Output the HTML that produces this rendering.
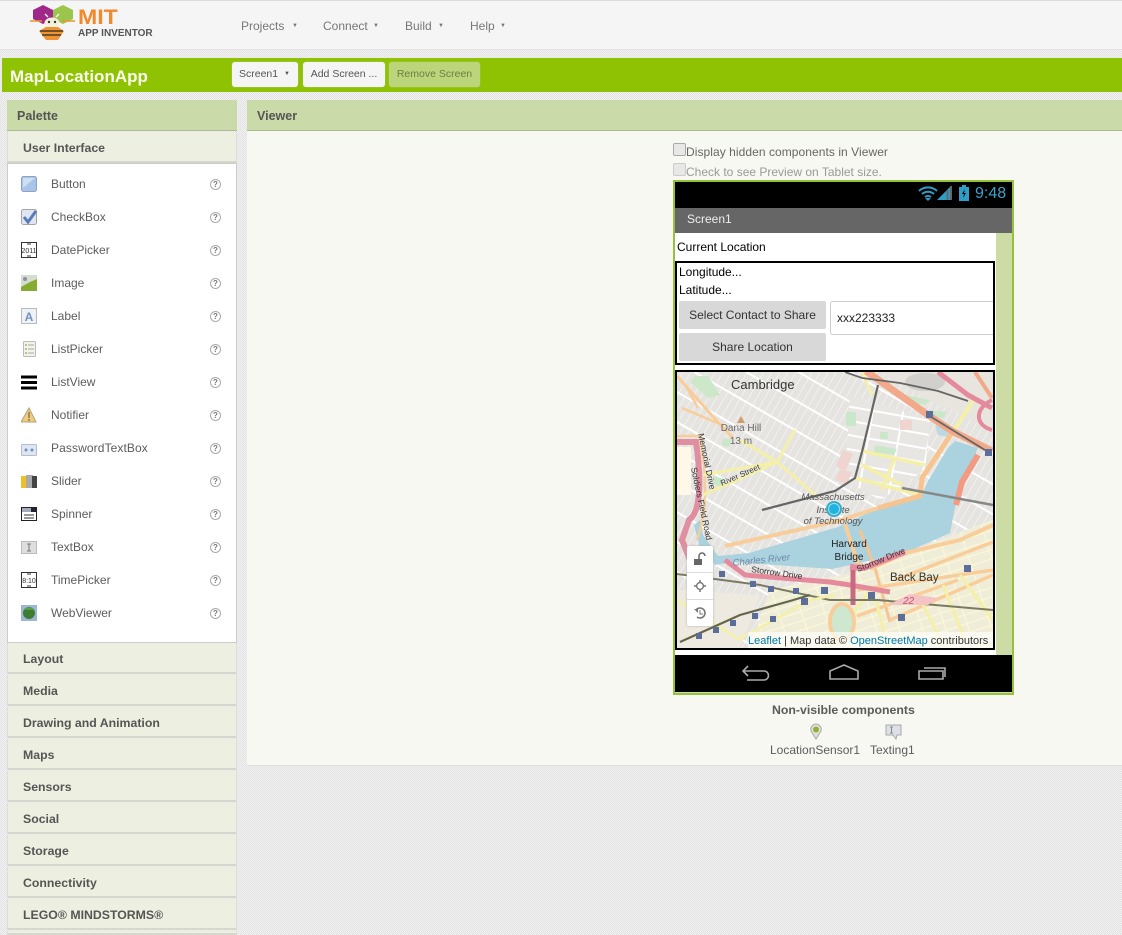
<!DOCTYPE html>
<html><head><meta charset="utf-8"><style>
html,body{margin:0;padding:0;width:1122px;height:935px;overflow:hidden}
body{position:relative;background-color:#e9e9e9;background-image:conic-gradient(#f2f2f2 25%,#e2e2e2 0 50%,#f2f2f2 0 75%,#e2e2e2 0);background-size:2px 2px;font-family:"Liberation Sans",sans-serif;color:#555}
div,span{position:absolute;white-space:nowrap;box-sizing:border-box}
svg{position:absolute;overflow:hidden}
#w{left:0;top:0;width:1122px;height:935px;overflow:hidden}
.n{top:19px;font-size:12px;line-height:15px;color:#777}
.c{font-size:6px;color:#777}
.h{left:7px;width:230px;height:31px;background:#edf0e1;border-bottom:2px solid #d6d8cd;border-right:1px solid #ddd;border-left:1px solid #ddd;font-weight:bold;font-size:12.3px;line-height:33px;padding-left:15px;color:#555}
.r{left:51px;font-size:12px;line-height:15px;color:#5c5c5c;margin-top:1px}
.q{left:210px;width:11px;height:11px;border:1px solid #aaa;border-radius:50%;font-size:8px;line-height:9px;text-align:center;color:#777;font-weight:bold}
.btn{background:#f5f5f5;border-radius:3px;top:62px;height:25px;font-size:10.5px;line-height:25px;text-align:center;color:#555;box-shadow:0 0 1px #ccc}
.b{color:#000;font-size:12px;line-height:14px}
.g{background:#d8d8d8;border-radius:2px;font-size:12px;text-align:center;color:#333;left:679px;width:147px;height:28px;line-height:29px}
</style></head><body><div id="w">
<div style="left:0;top:0;width:1122px;height:50px;background:#f5f5f5;border-top:1px solid #ddd;border-bottom:1px solid #e2e2e2"></div>
<svg style="left:28px;top:2px" width="50" height="40" viewBox="0 0 50 40">
<polygon points="5,8 15,3 25,8 25,17 15,22 5,17" fill="#a0288a"/>
<polygon points="25,8 35,3 45,8 45,17 35,22 25,17" fill="#9cc54e"/>
<path d="M2 19L14 19M34 19L47 19" stroke="#e8952f" stroke-width="1.5"/>
<ellipse cx="24" cy="21" rx="7.500" ry="5.500" fill="#f5f0dc"/>
<circle cx="21" cy="20" r="1.200" fill="#333"/><circle cx="27" cy="20" r="1.200" fill="#333"/>
<path d="M20 15L17 12M28 15L31 12" stroke="#fff" stroke-width="1.300"/>
<polygon points="11,29 18,25 30,25 36,29 30,38 18,38" fill="#ef9333"/>
<path d="M12 29H35M14 33H33" stroke="#4a3a28" stroke-width="1.600"/>
</svg>
<div style="left:78px;top:5px;font-size:21px;line-height:26px;font-weight:bold;color:#f08a2c;transform:scaleX(1.1);transform-origin:0 0">MIT</div>
<div style="left:78px;top:27px;font-size:10px;line-height:13px;font-weight:bold;color:#555">APP INVENTOR</div>
<div class="n" style="left:241px">Projects</div><div class="c" style="left:292px;top:23px">▼</div>
<div class="n" style="left:323px">Connect</div><div class="c" style="left:373px;top:23px">▼</div>
<div class="n" style="left:405px">Build</div><div class="c" style="left:438px;top:23px">▼</div>
<div class="n" style="left:470px">Help</div><div class="c" style="left:500px;top:23px">▼</div>

<div style="left:2px;top:58px;width:1120px;height:34px;background:#8fc202"></div>
<div style="left:10px;top:66px;font-size:17px;line-height:22px;font-weight:bold;color:#fafdf0">MapLocationApp</div>
<div class="btn" style="left:232px;width:66px;text-align:left;padding-left:7px">Screen1 <span class="c" style="left:52px;top:0;color:#555">▼</span></div>
<div class="btn" style="left:303px;width:82px">Add Screen ...</div>
<div class="btn" style="left:389px;width:91px;background:#bcd57a;color:#6c7c45">Remove Screen</div>

<div style="left:7px;top:100px;width:230px;height:31px;background:#cadaa8;border-bottom:1px solid #aebb92;font-weight:bold;font-size:12.5px;line-height:32px;padding-left:10px;color:#555">Palette</div>
<div style="left:247px;top:100px;width:875px;height:31px;background:#cadaa8;border-bottom:1px solid #aebb92;font-weight:bold;font-size:12.5px;line-height:32px;padding-left:10px;color:#555">Viewer</div>
<div class="h" style="top:132px">User Interface</div>
<div style="left:7px;top:163px;width:230px;height:480px;background:#fff;border:1px solid #ccc"></div>

<svg style="left:21px;top:176px" width="17" height="17"><rect x=".5" y=".5" width="15" height="15" rx="2" fill="#a9c4e6" stroke="#8ca3c4"/><path d="M2 2H14L2 12Z" fill="#cfdff3"/></svg>
<svg style="left:21px;top:209px" width="17" height="17"><rect x=".5" y=".5" width="15" height="15" rx="2" fill="#dfe6f1" stroke="#a5a5a5"/><path d="M3 8L7 13L15 2" fill="none" stroke="#5a7cba" stroke-width="3"/></svg>
<svg style="left:21px;top:242px" width="17" height="17"><rect x=".5" y=".5" width="15" height="15" fill="#fff" stroke="#333"/><path d="M6 2H10M6 14H10" stroke="#333"/><text x="8" y="11" font-size="7" text-anchor="middle" fill="#333" font-family="Liberation Sans">2011</text></svg>
<svg style="left:21px;top:275px" width="17" height="17"><rect width="16" height="16" fill="#d5dcd0"/><path d="M0 12L9 7L16 4V16H0Z" fill="#86ac2f"/><circle cx="4" cy="4" r="2" fill="#8d8da8"/></svg>
<svg style="left:21px;top:308px" width="17" height="17"><rect x=".5" y=".5" width="15" height="15" fill="#eef1f6" stroke="#bbb"/><text x="8" y="13" font-size="12" font-weight="bold" text-anchor="middle" fill="#7391bf" font-family="Liberation Sans">A</text></svg>
<svg style="left:23px;top:341px" width="15" height="17"><rect x=".5" y=".5" width="12" height="15" rx="1" fill="#f3f3e6" stroke="#bbb"/><path d="M5 4H11M5 8H11M5 12H11" stroke="#aaa"/><path d="M2 4H4M2 8H4M2 12H4" stroke="#6f9a4f"/></svg>
<svg style="left:21px;top:375px" width="17" height="15"><path d="M0 2H16M0 7.500H16M0 13H16" stroke="#000" stroke-width="3"/></svg>
<svg style="left:21px;top:407px" width="17" height="16"><polygon points="8,1 15,15 0,15" fill="#efcc7f" stroke="#b5a27a"/><rect x="7" y="5" width="2" height="6" fill="#a58a5a"/><rect x="7" y="12" width="2" height="2" fill="#a58a5a"/></svg>
<svg style="left:21px;top:441px" width="17" height="17"><rect x=".5" y="3.500" width="15" height="11" rx="1" fill="#dfe6f3" stroke="#b4bccb"/><circle cx="5" cy="9" r="1.500" fill="#6f8fc0"/><circle cx="11" cy="9" r="1.500" fill="#6f8fc0"/></svg>
<svg style="left:21px;top:474px" width="17" height="15"><rect y="2" width="5" height="12" fill="#efc026"/><rect x="5" y="1" width="7" height="13" fill="#aaa"/><rect x="11" y="2" width="5" height="12" fill="#444"/></svg>
<svg style="left:21px;top:507px" width="17" height="15"><rect x=".5" y=".5" width="15" height="13" fill="#fff" stroke="#222"/><rect x="1" y="1" width="14" height="4" fill="#a5adbd"/><rect x="10" y="1" width="5" height="4" fill="#223"/><path d="M3 8H13M3 11H13" stroke="#333"/></svg>
<svg style="left:21px;top:540px" width="17" height="15"><rect x=".5" y="1.500" width="15" height="12" fill="#dedede" stroke="#bbb"/><path d="M6 4H10M8 4V11M6 11H10" stroke="#777"/></svg>
<svg style="left:21px;top:572px" width="17" height="17"><rect x=".5" y=".5" width="15" height="15" fill="#fff" stroke="#333"/><path d="M6 2H10M6 14H10" stroke="#333"/><text x="8" y="11" font-size="7" text-anchor="middle" fill="#333" font-family="Liberation Sans">8:10</text></svg>
<svg style="left:21px;top:605px" width="17" height="17"><rect width="16" height="16" fill="#9db6d6"/><circle cx="8" cy="8" r="6" fill="#3d7d31"/><path d="M3 5A6 6 0 0 1 13 5Z" fill="#5a9e46"/></svg>

<div class="r" style="top:176px">Button</div><div class="q" style="top:179px">?</div>
<div class="r" style="top:209px">CheckBox</div><div class="q" style="top:212px">?</div>
<div class="r" style="top:242px">DatePicker</div><div class="q" style="top:245px">?</div>
<div class="r" style="top:275px">Image</div><div class="q" style="top:278px">?</div>
<div class="r" style="top:308px">Label</div><div class="q" style="top:311px">?</div>
<div class="r" style="top:341px">ListPicker</div><div class="q" style="top:344px">?</div>
<div class="r" style="top:374px">ListView</div><div class="q" style="top:377px">?</div>
<div class="r" style="top:407px">Notifier</div><div class="q" style="top:410px">?</div>
<div class="r" style="top:440px;letter-spacing:.1px">PasswordTextBox</div><div class="q" style="top:443px">?</div>
<div class="r" style="top:473px">Slider</div><div class="q" style="top:476px">?</div>
<div class="r" style="top:506px">Spinner</div><div class="q" style="top:509px">?</div>
<div class="r" style="top:539px">TextBox</div><div class="q" style="top:542px">?</div>
<div class="r" style="top:572px">TimePicker</div><div class="q" style="top:575px">?</div>
<div class="r" style="top:605px">WebViewer</div><div class="q" style="top:608px">?</div>

<div class="h" style="top:643px">Layout</div>
<div class="h" style="top:675px">Media</div>
<div class="h" style="top:707px">Drawing and Animation</div>
<div class="h" style="top:739px">Maps</div>
<div class="h" style="top:771px">Sensors</div>
<div class="h" style="top:803px">Social</div>
<div class="h" style="top:835px">Storage</div>
<div class="h" style="top:867px">Connectivity</div>
<div class="h" style="top:899px">LEGO® MINDSTORMS®</div>
<div class="h" style="top:931px;height:4px"></div>

<div style="left:247px;top:131px;width:875px;height:635px;background:#f7f8f2;border-bottom:1px solid #ddd"></div>
<div style="left:673px;top:143px;width:13px;height:13px;background:#e8e8e8;border:1px solid #aaa;border-radius:2px"></div>
<div style="left:686px;top:145px;font-size:12px;line-height:15px;color:#666;letter-spacing:.06px">Display hidden components in Viewer</div>
<div style="left:673px;top:163px;width:13px;height:13px;background:#e8e8e8;border:1px solid #ccc;border-radius:2px"></div>
<div style="left:686px;top:165px;font-size:12px;line-height:15px;color:#999">Check to see Preview on Tablet size.</div>

<div style="left:673px;top:180px;width:341px;height:515px;background:#cddba5;border:2px solid #97c13d"></div>
<div style="left:675px;top:182px;width:337px;height:26px;background:#000"></div>
<svg style="left:918px;top:184px" width="36" height="18" viewBox="0 0 36 18">
<path d="M1 7A13 13 0 0 1 19 7M4 10A9 9 0 0 1 16 10M7 13A5 5 0 0 1 13 13" fill="none" stroke="#2e9ec7" stroke-width="2"/><polygon points="10,17 7,14 13,14" fill="#2e9ec7"/>
<polygon points="19,16 33,2 33,16" fill="#2e9ec7"/><path d="M29.500 16V6M33 16V2" stroke="#666" stroke-width="2"/>
</svg>
<svg style="left:958px;top:185px" width="12" height="17"><rect x="1" y="2" width="10" height="14" fill="#2e9ec7"/><rect x="4" y="0" width="4" height="2" fill="#2e9ec7"/><path d="M7 4L4 9H6L5 13L8 8H6Z" fill="#000"/></svg>
<div style="left:975px;top:185px;font-size:16px;line-height:18px;color:#3aa3cc">9:48</div>
<div style="left:675px;top:208px;width:337px;height:25px;background:#666;color:#eee;font-size:12px;line-height:22px;padding-left:12px">Screen1</div>
<div style="left:675px;top:233px;width:321px;height:422px;background:#fff"></div>
<div class="b" style="left:677px;top:240px">Current Location</div>
<div style="left:675px;top:261px;width:320px;height:104px;border:2px solid #000;background:#fff"></div>
<div class="b" style="left:679px;top:265px">Longitude...</div>
<div class="b" style="left:679px;top:283px">Latitude...</div>
<div class="g" style="top:301px">Select Contact to Share</div>
<div class="g" style="top:333px">Share Location</div>
<div style="left:830px;top:301px;width:163px;height:34px;background:#fff;border:1px solid #ccc;border-right:0;border-radius:3px 0 0 3px;font-size:12px;line-height:32px;padding-left:6px;color:#222">xxx223333</div>

<div style="left:675px;top:370px;width:320px;height:280px;border:2px solid #000;background:#e9e6e1"></div>
<svg style="left:677px;top:372px;filter:blur(.35px)" width="316" height="276" viewBox="677 372 316 276" font-family="Liberation Sans">
<defs>
<pattern id="p1" width="7" height="26" patternUnits="userSpaceOnUse" patternTransform="rotate(30)"><rect width="7" height="26" fill="#e6e4e0"/><path d="M0 0V26" stroke="#f7f6f3" stroke-width="1.400"/><path d="M0 1H7" stroke="#fff" stroke-width="2"/></pattern>
<pattern id="p2" width="30" height="14" patternUnits="userSpaceOnUse" patternTransform="rotate(10)"><rect width="30" height="14" fill="#e8e6e2"/><path d="M0 1H30M1 0V14" stroke="#fff" stroke-width="2"/></pattern>
<pattern id="p3" width="22" height="9" patternUnits="userSpaceOnUse" patternTransform="rotate(-18)"><rect width="22" height="9" fill="#efedd8"/><path d="M0 1H22M1 0V9" stroke="#fbf8d8" stroke-width="1.200"/></pattern>
</defs>
<rect x="677" y="372" width="316" height="276" fill="url(#p1)"/>
<polygon points="850,395 930,420 925,470 880,500 845,480" fill="url(#p2)"/>
<polygon points="855,572 993,520 993,648 750,648 770,590" fill="url(#p3)"/>
<polygon points="677,590 760,595 740,648 677,648" fill="#eeeadf"/>
<polygon points="880,372 993,372 993,430 925,398" fill="#e8e5de"/>
<ellipse cx="925" cy="382" rx="20" ry="9" fill="#d2d0cc"/>

<path d="M690 382L708 398L720 395L708 376H695Z" fill="#cde8c9"/>
<path d="M846 412h10v14h-10zM714 476l10 3-3 8-10-3zM875 445l22 4-3 6-20-3zM724 438l8 2-3 7-8-2zM880 432h8v7h-8zM925 410l22 2-4 6-20-2zM905 395l25 5-5 5-22-4z" fill="#cbe7c9"/>
<path d="M843 450l10 4-8 18-9-6zM840 470l12 2-5 12-12-4zM900 420h12v10h-12z" fill="#f0d4d0"/>

<path d="M955 441L978 448L975 455L962 481L955 508L950 533L905 553L832 569L732 562L715 565L700 548L694 525L700 520L703 535L718 556L749 553L838 527L885 505L922 495L928 481L948 448Z" fill="#aad3df"/>
<path d="M935 425l13 3 0 9-10-2z" fill="#aad3df" opacity=".7"/>
<path d="M677 442H696C700 470 703 510 689 520L682 540L690 560" fill="none" stroke="#e08fa1" stroke-width="6"/>
<path d="M677 436H700C706 470 708 510 697 540" fill="none" stroke="#f7cd9c" stroke-width="2.500"/>
<rect x="677" y="447" width="14" height="48" fill="#fff7e8"/>

<path d="M677 376L716 420L733 438" fill="none" stroke="#f9cd99" stroke-width="3"/>
<path d="M682 408L722 425M687 388L698 408" fill="none" stroke="#f9cd99" stroke-width="2.500"/>
<path d="M703 475L777 462L795 430M740 440L777 462L818 497M703 495L777 462" fill="none" stroke="#f4f0a7" stroke-width="3"/>
<path d="M862 451L925 465M862 465L902 485M855 478L920 495M895 457L882 490" fill="none" stroke="#f4f0a7" stroke-width="3.500"/>
<path d="M862 372L872 395" fill="none" stroke="#f4f0a7" stroke-width="3"/>
<path d="M973 401L952 433" fill="none" stroke="#f4f0a7" stroke-width="4"/>
<path d="M878 508L920 496L922 478L952 433" fill="none" stroke="#f7c48f" stroke-width="5"/>
<path d="M878 508L838 521L725 546" fill="none" stroke="#f7cd9c" stroke-width="4"/>
<path d="M866 371L928 415L952 431L992 451" fill="none" stroke="#f2a98a" stroke-width="7"/>
<path d="M938 372L968 395L992 408" fill="none" stroke="#e58a9c" stroke-width="5"/>
<path d="M992 400C975 408 974 425 992 430" fill="none" stroke="#e58a9c" stroke-width="4"/>
<path d="M975 372L992 398" fill="none" stroke="#f2a98a" stroke-width="4"/>
<path d="M978 455L962 482L956 505" fill="none" stroke="#f39b82" stroke-width="6"/>
<path d="M845 372L862 378L900 383L938 391L968 401M928 415L985 450" fill="none" stroke="#666" stroke-width="1.800"/>
<path d="M762 510L835 491L855 478L863 448L878 385" fill="none" stroke="#666" stroke-width="2.200"/>
<path d="M902 488L993 505" fill="none" stroke="#888" stroke-width="2.500"/>
<path d="M860 530L875 568L890 622" fill="none" stroke="#f7c48f" stroke-width="3"/>
<path d="M845 524L858 564L872 568L905 553L960 540L993 525" fill="none" stroke="#f9cd99" stroke-width="4"/>
<path d="M895 580L993 542M858 590L993 570M857 616L958 580M890 620L993 575" fill="none" stroke="#f9cd99" stroke-width="3.500"/>
<path d="M876 600L888 648M918 595L945 648M943 585L965 640M960 575L993 620M870 590L830 648" fill="none" stroke="#f4f0a7" stroke-width="3"/>
<path d="M725 560L745 575L830 582L850 585L890 592" fill="none" stroke="#e58a9c" stroke-width="5"/>
<path d="M850 567L864 568L905 552" fill="none" stroke="#e58a9c" stroke-width="6"/>
<path d="M853 570V605" stroke="#c9687f" stroke-width="5"/>
<path d="M677 574L760 585L830 600L878 600L993 610" fill="none" stroke="#7a7a62" stroke-width="2"/>
<path d="M677 600L740 640M738 640L810 600L835 595" fill="none" stroke="#f4f0a7" stroke-width="2.500"/>
<path d="M680 642L740 615L790 601L810 595" fill="none" stroke="#64664c" stroke-width="2.200"/>
<ellipse cx="842" cy="622" rx="12" ry="18" fill="#cde8cf" stroke="#f7cd9c" stroke-width="4"/>
<path d="M888 605h40l10-7l-28-4z" fill="#f4c3c5"/>
<g fill="#5b6e9a"><rect x="926" y="411" width="7" height="7"/><rect x="985" y="449" width="7" height="7"/><rect x="964" y="565" width="7" height="7"/><rect x="821" y="587" width="7" height="7"/><rect x="868" y="592" width="7" height="7"/><rect x="801" y="598" width="7" height="7"/><rect x="719" y="571" width="6" height="6"/><rect x="750" y="581" width="6" height="6"/><rect x="768" y="586" width="6" height="6"/><rect x="793" y="588" width="6" height="6"/><rect x="898" y="614" width="7" height="7"/><rect x="696" y="633" width="6" height="6"/><rect x="713" y="627" width="6" height="6"/><rect x="730" y="620" width="6" height="6"/><rect x="752" y="613" width="6" height="6"/><rect x="770" y="616" width="6" height="6"/></g>
<text x="731" y="389" font-size="13" fill="#333">Cambridge</text>
<polygon points="741,416 745,423 737,423" fill="#d19c6d"/>
<text x="741" y="431" font-size="10" fill="#666" text-anchor="middle">Dana Hill</text>
<text x="741" y="444" font-size="10" fill="#666" text-anchor="middle">13 m</text>
<text x="0" y="0" font-size="8.500" fill="#333" transform="translate(698,434) rotate(78)">Memorial Drive</text>
<text x="0" y="0" font-size="8.500" fill="#333" transform="translate(691,468) rotate(78)">Soldiers Field Road</text>
<text x="0" y="0" font-size="8" fill="#333" transform="translate(722,486) rotate(-24)">River Street</text>
<text x="833" y="500" font-size="9.500" font-style="italic" fill="#555" text-anchor="middle">Massachusetts</text>
<text x="833" y="513" font-size="9.500" font-style="italic" fill="#555" text-anchor="middle">Institute</text>
<text x="833" y="524" font-size="9.500" font-style="italic" fill="#555" text-anchor="middle">of Technology</text>
<text x="849" y="547" font-size="10" fill="#222" text-anchor="middle">Harvard</text>
<text x="849" y="560" font-size="10" fill="#222" text-anchor="middle">Bridge</text>
<text x="0" y="0" font-size="9.500" font-style="italic" fill="#6c87a8" transform="translate(733,566) rotate(-6)">Charles River</text>
<text x="0" y="0" font-size="8.500" fill="#333" transform="translate(751,572) rotate(8)">Storrow Drive</text>
<text x="0" y="0" font-size="8.500" fill="#333" transform="translate(858,572) rotate(-22)">Storrow Drive</text>
<text x="890" y="581" font-size="11.500" fill="#333">Back Bay</text>
<text x="903" y="604" font-size="10" font-style="italic" fill="#c0566a">22</text>
<circle cx="834" cy="509" r="8" fill="#8bd7e8" opacity=".8"/><circle cx="834" cy="509" r="7" fill="none" stroke="#33a9cb" stroke-width="1.800"/><circle cx="834" cy="509" r="5" fill="#1fb3e0"/>
<rect x="748" y="632" width="246" height="16" fill="#fff" opacity=".65"/>
</svg>
<div style="left:687px;top:546px;width:26px;height:80px;background:#fff;border-radius:2px;box-shadow:0 0 2px #aaa"></div>
<div style="left:687px;top:572px;width:26px;height:1px;background:#ddd"></div>
<div style="left:687px;top:599px;width:26px;height:1px;background:#ddd"></div>
<svg style="left:692px;top:552px" width="16" height="70" viewBox="0 0 16 70">
<rect x="2" y="7" width="8" height="6" fill="#666"/><path d="M7 7V4A3 3 0 0 1 13 4" fill="none" stroke="#666" stroke-width="1.500"/>
<circle cx="8" cy="34" r="3.400" fill="none" stroke="#777" stroke-width="1.400"/><path d="M8 28V31M8 37V40M2 34H5M11 34H14" stroke="#777" stroke-width="1.500"/>
<path d="M4 58A5 5 0 1 1 5 65" fill="none" stroke="#777" stroke-width="1.600"/><path d="M2 57H6V61Z" fill="#777"/><path d="M8 58V62H11" fill="none" stroke="#777"/>
</svg>
<div style="left:748px;top:634px;font-size:11px;line-height:14px;color:#333"><span style="position:static;color:#0078a8">Leaflet</span> | Map data © <span style="position:static;color:#0078a8">OpenStreetMap</span> contributors</div>

<div style="left:675px;top:655px;width:337px;height:37px;background:#000"></div>
<svg style="left:735px;top:660px" width="215" height="28" viewBox="0 0 215 28" fill="none" stroke="#aaa" stroke-width="1.600">
<path d="M9 11H29A4.500 4.500 0 0 1 29 20H12M13 6L8 11L13 16"/>
<path d="M95 19V11L109 5L123 11V19Z"/>
<path d="M184 19H208V11H184ZM189 8H210V17"/>
</svg>

<div style="left:772px;top:703px;font-size:12.3px;line-height:15px;font-weight:bold;color:#5a5a5a">Non-visible components</div>
<svg style="left:808px;top:723px" width="16" height="18"><path d="M8 1A5.500 5.500 0 0 1 13 8L8 16L3 8A5.500 5.500 0 0 1 8 1Z" fill="#dfe2d4" stroke="#aaa"/><circle cx="8" cy="6.500" r="3" fill="#8fb03f"/></svg>
<svg style="left:885px;top:723px" width="18" height="18"><path d="M1 2H16V12H12L11 16L8 12H1Z" fill="#dde0e6" stroke="#aaa"/><path d="M5 4H8M6.500 4V10M5 10H8" stroke="#888"/></svg>
<div style="left:770px;top:743px;font-size:12px;line-height:15px;color:#5c5c5c">LocationSensor1</div>
<div style="left:870px;top:743px;font-size:12px;line-height:15px;color:#5c5c5c">Texting1</div>
</div></body></html>
